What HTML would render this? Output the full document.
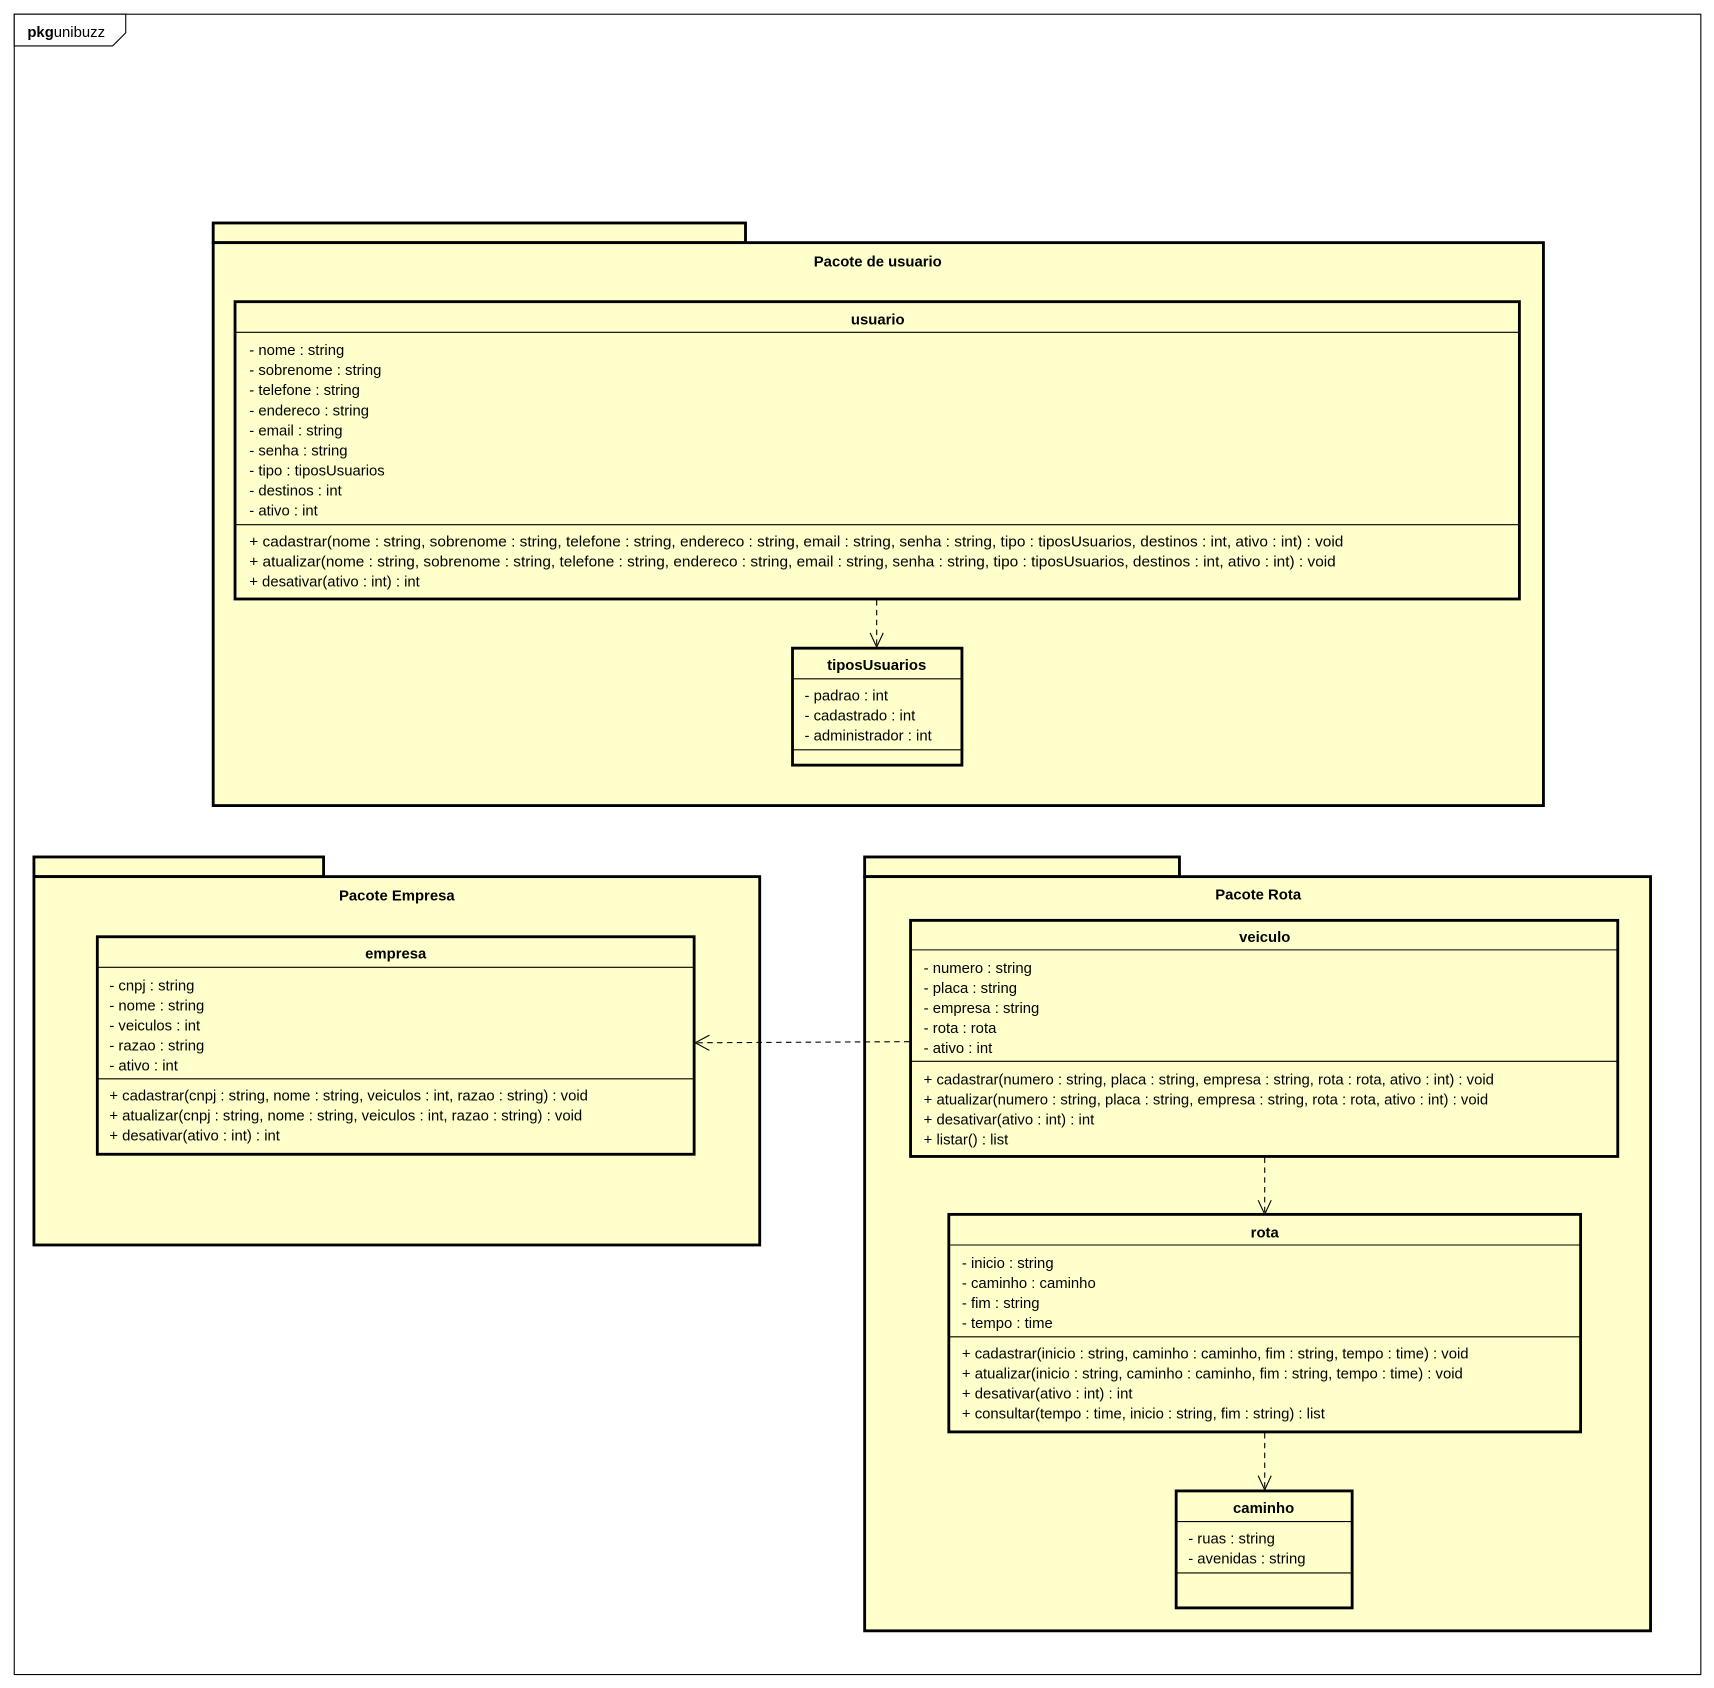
<!DOCTYPE html>
<html><head><meta charset="utf-8"><style>
html,body{margin:0;padding:0;background:#fff;width:1714px;height:1688px;overflow:hidden}
svg{display:block}
text{font-family:"Liberation Sans",Arial,sans-serif;font-size:13.6px;fill:#000}
.b{font-weight:bold;text-anchor:middle}
.pk{fill:#FFFFCC;stroke:#000;stroke-width:2.6}
.sep{stroke:#000;stroke-width:1}
.d{stroke:#000;stroke-width:1;stroke-dasharray:5,4;fill:none}
.ar{stroke:#000;stroke-width:1;fill:none}
</style></head><body>
<svg width="1714" height="1688" viewBox="0 0 1568 1544.3" xmlns="http://www.w3.org/2000/svg">
<rect x="13" y="13" width="1543" height="1519" fill="#fff" stroke="#000" stroke-width="1"/>
<polygon points="13,13 115,13 115,30 103,42 13,42" fill="#fff" stroke="#000" stroke-width="1"/>
<text x="25" y="34"><tspan font-weight="bold">pkg</tspan>unibuzz</text>

<!-- Pacote de usuario -->
<rect class="pk" x="195" y="204" width="487" height="18"/>
<rect class="pk" x="195" y="222" width="1217" height="515"/>
<text class="b" x="803" y="244">Pacote de usuario</text>
<rect class="pk" x="215" y="276" width="1175" height="272"/>
<line class="sep" x1="215" y1="304" x2="1390" y2="304"/>
<line class="sep" x1="215" y1="480" x2="1390" y2="480"/>
<text class="b" x="803" y="297">usuario</text>
<text x="228" y="325">- nome : string</text>
<text x="228" y="343.3">- sobrenome : string</text>
<text x="228" y="361.6">- telefone : string</text>
<text x="228" y="379.9">- endereco : string</text>
<text x="228" y="398.2">- email : string</text>
<text x="228" y="416.5">- senha : string</text>
<text x="228" y="434.8">- tipo : tiposUsuarios</text>
<text x="228" y="453.1">- destinos : int</text>
<text x="228" y="471.4">- ativo : int</text>
<text x="228" y="500" textLength="1001" lengthAdjust="spacingAndGlyphs">+ cadastrar(nome : string, sobrenome : string, telefone : string, endereco : string, email : string, senha : string, tipo : tiposUsuarios, destinos : int, ativo : int) : void</text>
<text x="228" y="518.3" textLength="994" lengthAdjust="spacingAndGlyphs">+ atualizar(nome : string, sobrenome : string, telefone : string, endereco : string, email : string, senha : string, tipo : tiposUsuarios, destinos : int, ativo : int) : void</text>
<text x="228" y="536.6">+ desativar(ativo : int) : int</text>
<rect class="pk" x="725" y="593" width="155" height="107"/>
<line class="sep" x1="725" y1="621" x2="880" y2="621"/>
<line class="sep" x1="725" y1="686" x2="880" y2="686"/>
<text class="b" x="802" y="613">tiposUsuarios</text>
<text x="736" y="641">- padrao : int</text>
<text x="736" y="659.3">- cadastrado : int</text>
<text x="736" y="677.6">- administrador : int</text>

<!-- Pacote Empresa -->
<rect class="pk" x="31" y="784" width="265" height="18"/>
<rect class="pk" x="31" y="802" width="664" height="337"/>
<text class="b" x="363" y="824">Pacote Empresa</text>
<rect class="pk" x="89" y="857" width="546" height="199"/>
<line class="sep" x1="89" y1="885" x2="635" y2="885"/>
<line class="sep" x1="89" y1="987" x2="635" y2="987"/>
<text class="b" x="362" y="877">empresa</text>
<text x="100" y="906">- cnpj : string</text>
<text x="100" y="924.3">- nome : string</text>
<text x="100" y="942.6">- veiculos : int</text>
<text x="100" y="960.9">- razao : string</text>
<text x="100" y="979.2">- ativo : int</text>
<text x="100" y="1007">+ cadastrar(cnpj : string, nome : string, veiculos : int, razao : string) : void</text>
<text x="100" y="1025.3">+ atualizar(cnpj : string, nome : string, veiculos : int, razao : string) : void</text>
<text x="100" y="1043.6">+ desativar(ativo : int) : int</text>

<!-- Pacote Rota -->
<rect class="pk" x="791" y="784" width="288" height="18"/>
<rect class="pk" x="791" y="802" width="719" height="690"/>
<text class="b" x="1151" y="823">Pacote Rota</text>
<rect class="pk" x="833" y="842" width="647" height="216"/>
<line class="sep" x1="833" y1="869" x2="1480" y2="869"/>
<line class="sep" x1="833" y1="971" x2="1480" y2="971"/>
<text class="b" x="1157" y="862">veiculo</text>
<text x="845" y="890">- numero : string</text>
<text x="845" y="908.3">- placa : string</text>
<text x="845" y="926.6">- empresa : string</text>
<text x="845" y="944.9">- rota : rota</text>
<text x="845" y="963.2">- ativo : int</text>
<text x="845" y="992">+ cadastrar(numero : string, placa : string, empresa : string, rota : rota, ativo : int) : void</text>
<text x="845" y="1010.3">+ atualizar(numero : string, placa : string, empresa : string, rota : rota, ativo : int) : void</text>
<text x="845" y="1028.6">+ desativar(ativo : int) : int</text>
<text x="845" y="1046.9">+ listar() : list</text>
<rect class="pk" x="868" y="1111" width="578" height="199"/>
<line class="sep" x1="868" y1="1139" x2="1446" y2="1139"/>
<line class="sep" x1="868" y1="1223" x2="1446" y2="1223"/>
<text class="b" x="1157" y="1132">rota</text>
<text x="880" y="1160">- inicio : string</text>
<text x="880" y="1178.3">- caminho : caminho</text>
<text x="880" y="1196.6">- fim : string</text>
<text x="880" y="1214.9">- tempo : time</text>
<text x="880" y="1243">+ cadastrar(inicio : string, caminho : caminho, fim : string, tempo : time) : void</text>
<text x="880" y="1261.3">+ atualizar(inicio : string, caminho : caminho, fim : string, tempo : time) : void</text>
<text x="880" y="1279.6">+ desativar(ativo : int) : int</text>
<text x="880" y="1297.9">+ consultar(tempo : time, inicio : string, fim : string) : list</text>
<rect class="pk" x="1076" y="1364" width="161" height="107"/>
<line class="sep" x1="1076" y1="1392" x2="1237" y2="1392"/>
<line class="sep" x1="1076" y1="1439" x2="1237" y2="1439"/>
<text class="b" x="1156" y="1384">caminho</text>
<text x="1087" y="1412">- ruas : string</text>
<text x="1087" y="1430.3">- avenidas : string</text>

<!-- dependencies -->
<line class="d" x1="802" y1="549" x2="802" y2="591"/>
<polyline class="ar" points="796,579 802,592 808,579"/>
<line class="d" x1="832" y1="953" x2="638" y2="954"/>
<polyline class="ar" points="649,947 636,954 649,961"/>
<line class="d" x1="1157" y1="1059" x2="1157" y2="1110"/>
<polyline class="ar" points="1151,1098 1157,1111 1163,1098"/>
<line class="d" x1="1157" y1="1311" x2="1157" y2="1362"/>
<polyline class="ar" points="1151,1350 1157,1363 1163,1350"/>
</svg>
</body></html>
